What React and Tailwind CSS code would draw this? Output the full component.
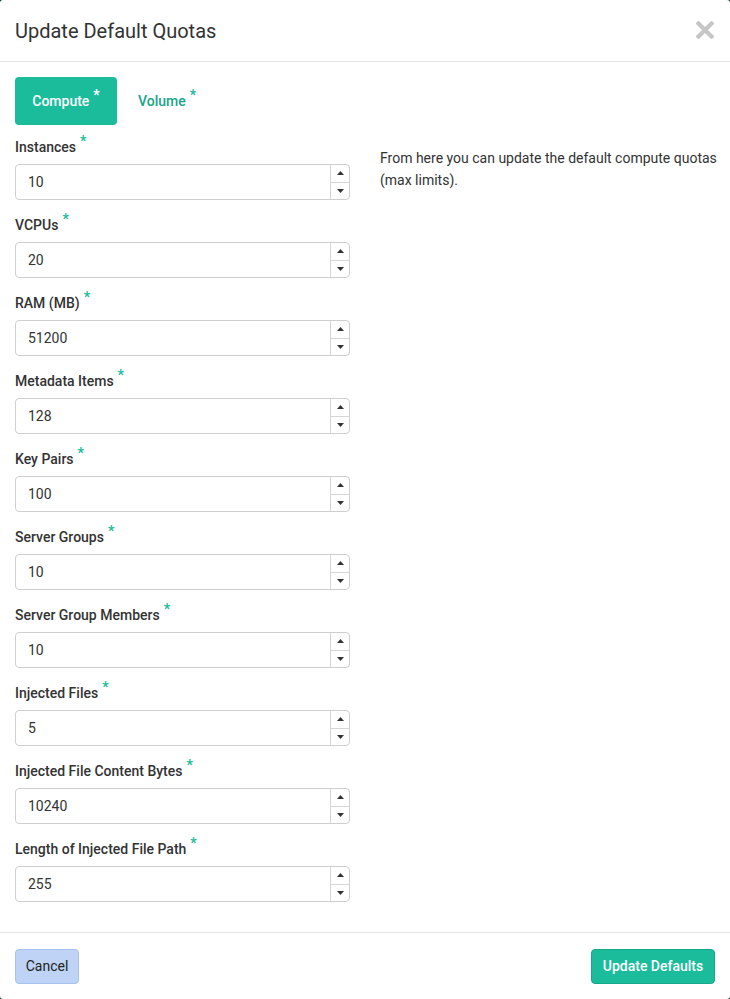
import React from "react";

const fields = [
  ["Instances", "10"],
  ["VCPUs", "20"],
  ["RAM (MB)", "51200"],
  ["Metadata Items", "128"],
  ["Key Pairs", "100"],
  ["Server Groups", "10"],
  ["Server Group Members", "10"],
  ["Injected Files", "5"],
  ["Injected File Content Bytes", "10240"],
  ["Length of Injected File Path", "255"],
];

function Star({ white }) {
  return (
    <span
      className={
        "relative top-[-6px] ml-[4px] text-[14px] font-bold leading-none " +
        (white ? "text-white" : "text-[#1abc9c]")
      }
    >
      *
    </span>
  );
}

function Field({ label, value }) {
  return (
    <div className="flex flex-col">
      <div className="h-[20px] whitespace-nowrap text-[14px] font-medium leading-[20px] text-[#333]">
        {label}
        <Star />
      </div>
      <div className="mt-[7px] flex h-[36px] rounded-[4px] border border-[#cfcfcf] bg-white">
        <div className="flex flex-1 items-center pl-[12px] text-[14px] text-[#333]">{value}</div>
        <div className="flex w-[19px] flex-col border-l border-[#d6d6d6]">
          <div className="flex flex-1 items-center justify-center border-b border-[#d6d6d6]">
            <svg width="7" height="4" viewBox="0 0 7 4"><path d="M0 4 L3.5 0 L7 4 Z" fill="#333" /></svg>
          </div>
          <div className="flex flex-1 items-center justify-center">
            <svg width="7" height="4" viewBox="0 0 7 4"><path d="M0 0 L3.5 4 L7 0 Z" fill="#333" /></svg>
          </div>
        </div>
      </div>
    </div>
  );
}

export default function App() {
  return (
    <div
      className="h-[999px] w-full bg-[#0f3d2e]"
      style={{ fontFamily: 'Roboto, "Liberation Sans", sans-serif' }}
    >
      <div className="flex h-[999px] flex-col rounded-[3px] bg-white">
        <div className="flex h-[62px] shrink-0 items-center justify-between border-b border-[#e5e5e5] px-[15px]">
          <div className="pt-[1px] text-[20px] text-[#333]">Update Default Quotas</div>
          <svg width="18" height="18" viewBox="0 0 18 18" className="mb-[2px] mr-[1px]">
            <path d="M2.5 2.5 L15.5 15.5 M15.5 2.5 L2.5 15.5" stroke="#c6c6c6" strokeWidth="4.2" strokeLinecap="square" />
          </svg>
        </div>
        <div className="flex-1 px-[15px] pt-[15px]">
          <div className="flex items-center">
            <div className="flex h-[48px] w-[102px] items-center justify-center rounded-[4px] bg-[#1abc9c] text-[14px] font-medium text-white">
              Compute
              <Star white />
            </div>
            <div className="ml-[21px] flex items-center text-[14px] font-medium text-[#17a589]">
              Volume
              <Star />
            </div>
          </div>
          <div className="mt-[12px] flex">
            <div className="flex w-[335px] shrink-0 flex-col gap-[15px]">
              {fields.map(([l, v]) => (
                <Field key={l} label={l} value={v} />
              ))}
            </div>
            <div className="ml-[30px] mr-[-15px] mt-[10px] min-w-0 flex-1 text-[14px] leading-[22px] text-[#333]">
              From here you can update the default compute quotas (max limits).
            </div>
          </div>
        </div>
        <div className="flex h-[67px] shrink-0 items-center justify-between border-t border-[#e5e5e5] px-[15px]">
          <div className="flex h-[35px] w-[64px] items-center justify-center rounded-[4px] border border-[#a8c2f0] bg-[#bed3f6] text-[14px] text-[#222]">
            Cancel
          </div>
          <div className="flex h-[35px] w-[124px] items-center justify-center whitespace-nowrap rounded-[4px] border border-[#17a88b] bg-[#1abc9c] text-[14px] font-medium text-white">
            Update Defaults
          </div>
        </div>
      </div>
    </div>
  );
}
